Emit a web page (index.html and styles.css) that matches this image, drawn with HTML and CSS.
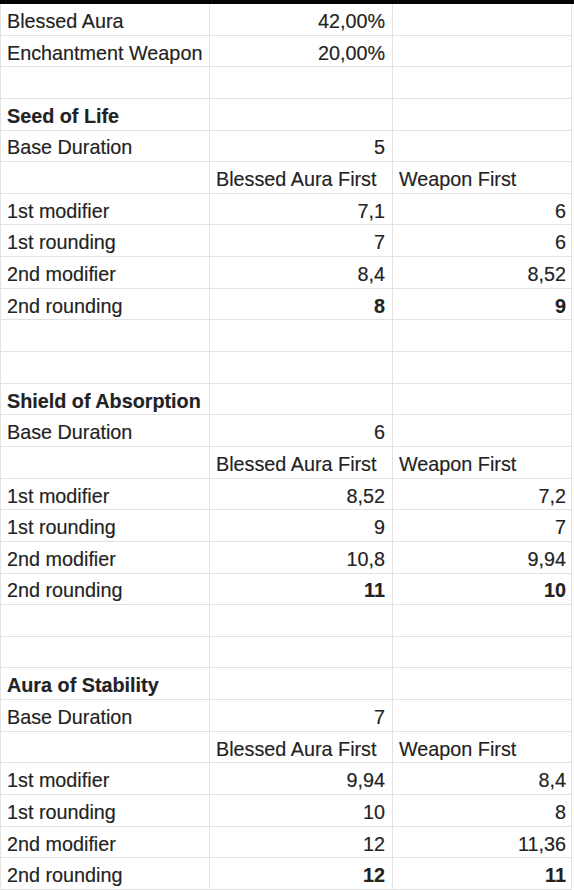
FILE: index.html
```html
<!DOCTYPE html>
<html>
<head>
<meta charset="utf-8">
<link rel="stylesheet" href="styles.css">
</head>
<body>
<div class="topbar"></div>
<div class="sheet">
  <div class="c"><span>Blessed Aura</span></div><div class="c r"><span>42,00%</span></div><div class="c"></div>
  <div class="c"><span>Enchantment Weapon</span></div><div class="c r"><span>20,00%</span></div><div class="c"></div>
  <div class="c"></div><div class="c"></div><div class="c"></div>

  <div class="c b"><span>Seed of Life</span></div><div class="c"></div><div class="c"></div>
  <div class="c"><span>Base Duration</span></div><div class="c r"><span>5</span></div><div class="c"></div>
  <div class="c"></div><div class="c"><span>Blessed Aura First</span></div><div class="c"><span>Weapon First</span></div>
  <div class="c"><span>1st modifier</span></div><div class="c r"><span>7,1</span></div><div class="c r"><span>6</span></div>
  <div class="c"><span>1st rounding</span></div><div class="c r"><span>7</span></div><div class="c r"><span>6</span></div>
  <div class="c"><span>2nd modifier</span></div><div class="c r"><span>8,4</span></div><div class="c r"><span>8,52</span></div>
  <div class="c"><span>2nd rounding</span></div><div class="c r b"><span>8</span></div><div class="c r b"><span>9</span></div>
  <div class="c"></div><div class="c"></div><div class="c"></div>
  <div class="c"></div><div class="c"></div><div class="c"></div>

  <div class="c b"><span>Shield of Absorption</span></div><div class="c"></div><div class="c"></div>
  <div class="c"><span>Base Duration</span></div><div class="c r"><span>6</span></div><div class="c"></div>
  <div class="c"></div><div class="c"><span>Blessed Aura First</span></div><div class="c"><span>Weapon First</span></div>
  <div class="c"><span>1st modifier</span></div><div class="c r"><span>8,52</span></div><div class="c r"><span>7,2</span></div>
  <div class="c"><span>1st rounding</span></div><div class="c r"><span>9</span></div><div class="c r"><span>7</span></div>
  <div class="c"><span>2nd modifier</span></div><div class="c r"><span>10,8</span></div><div class="c r"><span>9,94</span></div>
  <div class="c"><span>2nd rounding</span></div><div class="c r b"><span>11</span></div><div class="c r b"><span>10</span></div>
  <div class="c"></div><div class="c"></div><div class="c"></div>
  <div class="c"></div><div class="c"></div><div class="c"></div>

  <div class="c b"><span>Aura of Stability</span></div><div class="c"></div><div class="c"></div>
  <div class="c"><span>Base Duration</span></div><div class="c r"><span>7</span></div><div class="c"></div>
  <div class="c"></div><div class="c"><span>Blessed Aura First</span></div><div class="c"><span>Weapon First</span></div>
  <div class="c"><span>1st modifier</span></div><div class="c r"><span>9,94</span></div><div class="c r"><span>8,4</span></div>
  <div class="c"><span>1st rounding</span></div><div class="c r"><span>10</span></div><div class="c r"><span>8</span></div>
  <div class="c"><span>2nd modifier</span></div><div class="c r"><span>12</span></div><div class="c r"><span>11,36</span></div>
  <div class="c"><span>2nd rounding</span></div><div class="c r b"><span>12</span></div><div class="c r b"><span>11</span></div>
</div>
</body>
</html>
```
FILE: styles.css
```css
html, body {
  margin: 0;
  padding: 0;
  background: #ffffff;
}
body {
  width: 574px;
  height: 890px;
  overflow: hidden;
  font-family: "Liberation Sans", Arial, sans-serif;
  font-size: 19.8px;
  color: #222222;
}
.topbar {
  height: 4px;
  background: #050505;
}
.sheet {
  display: grid;
  grid-template-columns: 209px 183px 179px;
  grid-template-rows: repeat(28, 1fr);
  height: 886px;
  border-left: 1px solid #e2e2e2;
  box-sizing: border-box;
  width: 572px;
}
.c {
  border-right: 1px solid #e2e2e2;
  border-bottom: 1px solid #e2e2e2;
  padding: 5px 6px 0 6px;
  display: flex;
  align-items: center;
  white-space: nowrap;
  line-height: 1;
}
.c span {
  display: inline-block;
  transform: scaleY(1.06);
  transform-origin: center;
  -webkit-text-stroke: 0.15px #222222;
}
.r {
  justify-content: flex-end;
  padding-right: 7px;
}
.c.r:nth-child(3n) {
  padding-right: 5px;
}
.b {
  font-weight: bold;
}
```
